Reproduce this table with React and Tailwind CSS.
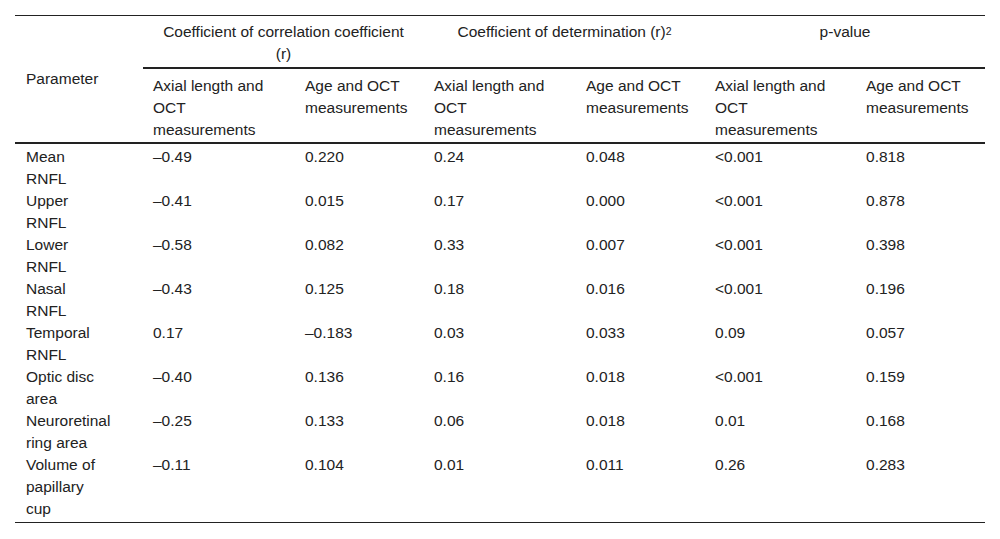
import React from 'react';

const rows = [
  [['Mean', 'RNFL'], '–0.49', '0.220', '0.24', '0.048', '<0.001', '0.818'],
  [['Upper', 'RNFL'], '–0.41', '0.015', '0.17', '0.000', '<0.001', '0.878'],
  [['Lower', 'RNFL'], '–0.58', '0.082', '0.33', '0.007', '<0.001', '0.398'],
  [['Nasal', 'RNFL'], '–0.43', '0.125', '0.18', '0.016', '<0.001', '0.196'],
  [['Temporal', 'RNFL'], '0.17', '–0.183', '0.03', '0.033', '0.09', '0.057'],
  [['Optic disc', 'area'], '–0.40', '0.136', '0.16', '0.018', '<0.001', '0.159'],
  [['Neuroretinal', 'ring area'], '–0.25', '0.133', '0.06', '0.018', '0.01', '0.168'],
  [['Volume of', 'papillary', 'cup'], '–0.11', '0.104', '0.01', '0.011', '0.26', '0.283'],
];

const widths = ['w-[128px]', 'w-[152px]', 'w-[129px]', 'w-[152px]', 'w-[129px]', 'w-[151px]', 'w-[129px]'];

const subHeads = [
  'Axial length and OCT measurements',
  'Age and OCT measurements',
  'Axial length and OCT measurements',
  'Age and OCT measurements',
  'Axial length and OCT measurements',
  'Age and OCT measurements',
];

const App = () => {
  return (
    <div className="min-h-screen bg-white pt-[15px] px-[15px] font-['Liberation_Sans',Arial,sans-serif] text-[15.5px] leading-[22px] text-[#222]">
      <table className="w-[970px] table-fixed border-collapse">
        <colgroup>
          {widths.map((w, i) => (
            <col key={i} className={w} />
          ))}
        </colgroup>
        <thead>
          <tr className="border-t border-[#222]">
            <th rowSpan={2} className="font-normal text-left align-middle pl-[11px] pr-[10px] border-b-2 border-[#222]">
              Parameter
            </th>
            <th colSpan={2} className="font-normal text-center align-top px-[10px] pt-[5px] pb-[2px] border-b-2 border-[#222]">
              Coefficient of correlation coefficient
              <br />
              (r)
            </th>
            <th colSpan={2} className="font-normal text-center align-top px-[10px] pt-[5px] pb-[2px] border-b-2 border-[#222]">
              Coefficient of determination (r)<sup className="text-[10.5px] relative -top-[2px]">2</sup>
            </th>
            <th colSpan={2} className="font-normal text-center align-top px-[10px] pt-[5px] pb-[2px] border-b-2 border-[#222]">
              p-value
            </th>
          </tr>
          <tr className="border-b-2 border-[#222]">
            {subHeads.map((t, i) => (
              <th key={i} className="font-normal text-left align-top px-[10px] pt-[6px] pb-[1px]">
                {t}
              </th>
            ))}
          </tr>
        </thead>
        <tbody className="border-b border-[#222]">
          {rows.map((r, ri) => (
            <tr key={ri}>
              {r.map((c, ci) => (
                <td
                  key={ci}
                  className={`align-top ${ci === 0 ? 'pl-[11px]' : 'pl-[10px]'} pr-[10px] ${ri === 0 ? 'pt-[2px]' : ''} ${ri === rows.length - 1 ? 'pb-[2px]' : ''}`}
                >
                  {ci === 0 ? c.map((line, li) => <div key={li}>{line}</div>) : c}
                </td>
              ))}
            </tr>
          ))}
        </tbody>
      </table>
    </div>
  );
};

export default App;
